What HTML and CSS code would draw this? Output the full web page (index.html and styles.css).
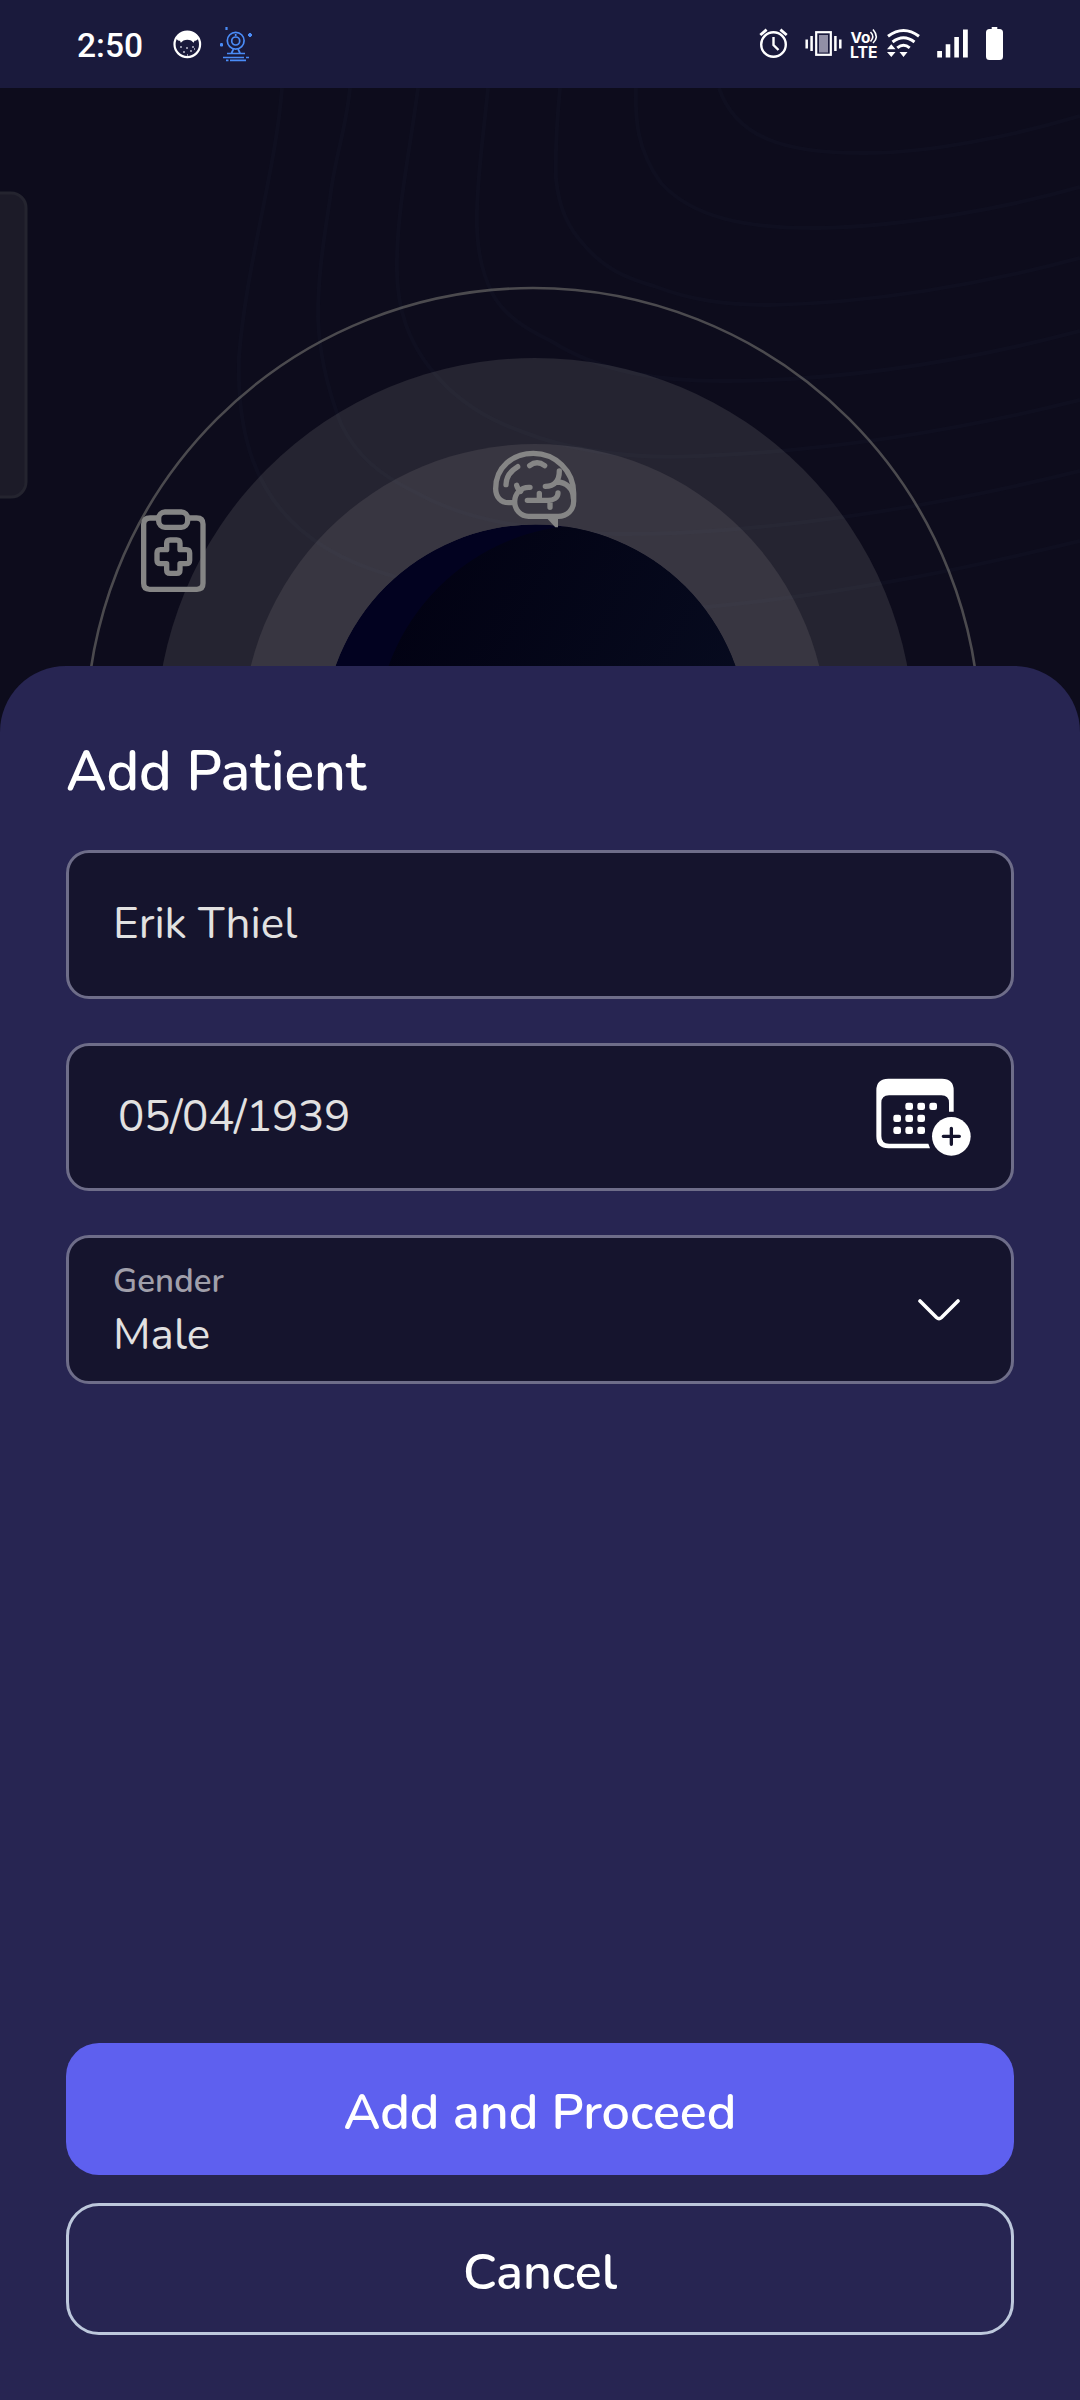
FILE: index.html
```html
<!DOCTYPE html>
<html lang="en">
<head>
<meta charset="utf-8">
<title>Add Patient</title>
<link rel="stylesheet" href="styles.css">
</head>
<body>
<div class="screen">
  <header class="status">
    <span class="clock">2:50</span>
    <svg class="status-left" viewBox="168 0 90 88" fill="none">
      <circle cx="187.3" cy="44.3" r="12.8" stroke="#fff" stroke-width="2.2"/>
      <path d="M176 38c3-5 7-7 11.300-7s8.500 2 11.400 7c-1 2-3 3-4.200 2.800l-.8 2-2.600-2.300c-2.600-.9-5-.9-7.600 0l-2.700 2.300-.8-2c-1.500 0-3-.8-4-2.800z" fill="#fff"/>
      <path d="M180 47h2m4 1h2m4-1h2m-11 5h2m5-1h2m-5 4h1m6-6h1" stroke="#b9b9c9" stroke-width="1.600"/>
      <g stroke="#4a8cf7" stroke-width="1.700">
        <circle cx="235.700" cy="40.700" r="8.400"/>
        <circle cx="235.700" cy="41" r="4"/>
        <path d="M235.700 34v2M233.500 49l-2 4m6.500-4l2 4M227 53.500h18M223 57.500h21M246 57.500h3M226 60.300h2.500M230 60.300h16"/>
        <path d="M226.500 27v3M221.500 43v3.500M220 44.800h3M248 35h4m-2-2v4" stroke-width="2.200"/>
      </g>
    </svg>
    <svg class="status-right" viewBox="750 0 330 88" fill="none" stroke="#fff">
      <circle cx="773.500" cy="44.500" r="12.300" stroke-width="2.400"/>
      <path d="M773.500 37v8l5 5" stroke-width="2.400"/>
      <path d="M760.300 35l6.300-5.400M786.700 35l-6.300-5.400" stroke-width="2.800"/>
      <rect x="816.200" y="32.200" width="14.600" height="22.600" stroke-width="2.200"/>
      <rect x="819" y="35" width="9" height="17.500" fill="#918fa6" stroke="none"/>
      <path d="M806.700 39.500v9M811.600 36v15M835.400 36v15M840.300 39.500v9" stroke-width="2.500"/>
      <g class="volte" fill="#fff" stroke="none">
        <text x="850.500" y="42.500" font-size="15" textLength="20" lengthAdjust="spacingAndGlyphs">Vo</text>
        <text x="850" y="57.500" font-size="16.500" textLength="27.500" lengthAdjust="spacingAndGlyphs">LTE</text>
      </g>
      <path d="M870.500 32q4.500 4.500 0 9.500M873 29.500q6.500 7.500 0 13.500" stroke-width="1.600"/>
      <path d="M888 36.200q15.500-11.500 31 0M892.500 42q11-8.500 22 0M897.300 47.800q6.200-5 12.400 0" stroke-width="3"/>
      <path d="M899.500 52h8l-4 5zM887 49.300h8.500l-4.200-5zM887 52h8.500l-4.200 5z" fill="#fff" stroke="none"/>
      <path d="M937.200 57.500v-6.500h4.800v6.500zM945.700 57.500v-13.200h4.600v13.200zM954.300 57.500v-20.500h4.600v20.500zM963 57.500v-28h4.800v28z" fill="#fff" stroke="none"/>
      <path d="M991.700 29v-2h5.600v2h2.200q3.500 0 3.500 3.500v24q0 3.500-3.500 3.500h-10q-3.500 0-3.500-3.500v-24q0-3.500 3.500-3.500z" fill="#fff" stroke="none"/>
    </svg>
  </header>

  <section class="hero">
    <svg viewBox="0 88 1080 644" fill="none">
      <defs>
        <linearGradient id="orb" x1="440" y1="540" x2="740" y2="700" gradientUnits="userSpaceOnUse">
          <stop offset="0" stop-color="#020213"/><stop offset="1" stop-color="#070b1f"/>
        </linearGradient>
        <clipPath id="core"><circle cx="535.500" cy="736.500" r="212"/></clipPath>
      </defs>
      <rect x="-20" y="193" width="46" height="304" rx="15" fill="#1c1b28" stroke="#24242f" stroke-width="3"/>
      <circle cx="535" cy="737" r="379" fill="#252431"/>
      <circle cx="535" cy="737" r="293" fill="#383641"/>
      <circle cx="533" cy="735" r="447" stroke="#4b4a4e" stroke-width="2.600"/>
      <g class="contours">
        <path d="M282 88C276 170 246 265 239 357C236 450 262 540 393 576C500 625 640 615 716 606C860 592 980 565 1080 541"/>
        <path d="M350 88C346 130 334 160 330 199C322 250 318 280 318 317C319 350 326 385 341 424C356 455 380 475 413 491C450 512 490 522 537 528C650 545 860 525 1080 471"/>
        <path d="M418 88C410 150 398 205 397 258C396 285 399 305 406 325C416 352 430 370 448 388C470 408 490 420 523 432C590 458 660 458 700 456C850 450 980 425 1080 400"/>
        <path d="M488 88C484 130 478 170 477 210C476 243 480 268 492 293C504 315 524 328 551 341C600 372 660 382 730 381C850 380 970 360 1080 331"/>
        <path d="M560 88C557 120 555 150 556 179C559 208 568 228 585 246C604 268 625 278 654 286C690 300 725 305 771 305C870 303 980 285 1080 258"/>
        <path d="M636 88C635 120 637 150 661 183C692 217 745 229 820 228C910 226 1010 207 1080 187"/>
        <path d="M719 88C736 138 785 153 861 153C930 154 1020 134 1080 116"/>
      </g>
      <g clip-path="url(#core)">
        <circle cx="535.500" cy="736.500" r="212" fill="#020220"/>
        <circle cx="589" cy="738" r="213" fill="url(#orb)"/>
      </g>
      <g class="glyph" transform="translate(440 420) scale(.33333)">
        <path d="M218 248h-12c-24 0-39-18-39-42C167 142 218 100 280 100c66 0 121 52 121 120v24c0 26-20 45-46 45h-89c-24 0-42-20-42-44s18-43 42-43h4"/>
        <path d="M230 196q3 12 12 18M198 194c0-22 15-42 35-54M269 137q22-17 45 0M316 199c28 0 42-18 42-46M350 186c28 0 50 20 50 48M262 241h62c17 0 30-8 30-22M298 220v18M330 244v18"/>
        <path d="M320 294h34v28h-8z" fill="#858585" stroke="none"/>
      </g>
      <g class="glyph" transform="translate(110 480) scale(.33333)">
        <path d="M140 114h-20q-19 0-19 19v177q0 18 18 18h142q18 0 18-18v-177q0-19-19-19h-20"/>
        <rect x="146" y="96" width="87" height="46" rx="19"/>
        <path d="M180 180h20q10 0 10 10v19h19q10 0 10 10v22q0 10-10 10h-19v19q0 10-10 10h-20q-10 0-10-10v-19h-19q-10 0-10-10v-22q0-10 10-10h19v-19q0-10 10-10z"/>
      </g>
    </svg>
  </section>

  <main class="sheet">
    <h1>Add Patient</h1>
    <form class="fields">
      <div class="field name">Erik Thiel</div>
      <div class="field date">
        <span>05/04/1939</span>
        <svg class="calendar" viewBox="105 112 290 240">
          <path d="M145 117h161q35 0 35 35v64h-14v-26q0-23-23-23h-157q-23 0-23 23v99q0 23 23 23h118l5 14h-125q-36 0-36-36v-138q0-35 36-35z"/>
          <g>
            <rect x="196" y="189" width="23" height="22" rx="7"/><rect x="232" y="189" width="23" height="22" rx="7"/><rect x="268" y="189" width="23" height="22" rx="7"/>
            <rect x="160" y="225" width="23" height="22" rx="7"/><rect x="196" y="225" width="23" height="22" rx="7"/><rect x="232" y="225" width="23" height="22" rx="7"/>
            <rect x="160" y="261" width="23" height="22" rx="7"/><rect x="196" y="261" width="23" height="22" rx="7"/><rect x="232" y="261" width="23" height="22" rx="7"/>
          </g>
          <circle cx="334" cy="290" r="58"/>
          <path class="plus" d="M310 290h48M334 266v48"/>
        </svg>
      </div>
      <div class="field gender">
        <div class="stack"><small>Gender</small><span>Male</span></div>
        <svg class="chevron" viewBox="0 0 42 22"><path d="M2 2L18.500 18.500Q21 20.700 23.500 18.500L40 2"/></svg>
      </div>
    </form>
    <div class="actions">
      <button class="primary">Add and Proceed</button>
      <button class="secondary">Cancel</button>
    </div>
  </main>
</div>
</body>
</html>
```
FILE: styles.css
```css
* { box-sizing: border-box; }
body {
  margin: 0;
  background: #0d0c1c;
  font-family: Nunito, "Open Sans", sans-serif;
}
.screen {
  width: 1080px;
  height: 2400px;
  display: flex;
  flex-direction: column;
  overflow: hidden;
}
svg { display: block; flex: none; }

.status {
  height: 88px;
  flex: none;
  display: flex;
  padding-left: 77px;
  background: #1a1a3c;
  color: #fff;
}
.clock {
  width: 91px;
  font: 500 33.6px/91px Roboto, sans-serif;
}
.status-left { width: 90px; height: 88px; }
.status-right { width: 330px; height: 88px; margin-left: auto; }
.volte { font-family: Inter, sans-serif; font-weight: 700; }

.hero { height: 644px; flex: none; }
.hero svg { width: 1080px; height: 644px; }
.contours { stroke: #8a9cc0; stroke-opacity: .022; stroke-width: 4; }
.glyph {
  stroke: #858585;
  stroke-width: 16;
  stroke-linecap: round;
  stroke-linejoin: round;
}

.sheet {
  position: relative;
  flex: 1;
  display: flex;
  flex-direction: column;
  margin-top: -66px;
  padding: 76px 66px 65px;
  border-radius: 66px 66px 0 0;
  background: #272552;
}
h1 {
  margin: 0 0 48px;
  color: #fff;
  font-size: 55.3px;
  font-weight: 600;
  line-height: 60px;
}
.fields { display: flex; flex-direction: column; gap: 44px; }
.field {
  display: flex;
  align-items: center;
  justify-content: space-between;
  height: 149px;
  padding: 0 43px;
  border: 3px solid #6e6d89;
  border-radius: 23px;
  background: #15142d;
  color: #e2e1e1;
  font-size: 44px;
  line-height: 50px;
}
.name { padding: 0 44px 2px; }
.date { height: 148px; padding: 0 39px 0 49px; letter-spacing: -.4px; }
.date span { padding-bottom: 0; }
.calendar { width: 96.7px; height: 80px; fill: #fff; }
.plus { stroke: #15142d; stroke-width: 10; stroke-linecap: round; }
.gender { padding: 0 51px 0 44px; }
.stack {
  display: flex;
  flex-direction: column;
  gap: 8px;
  padding-top: 3px;
}
.stack small {
  color: #a09faa;
  font-size: 33px;
  font-weight: 600;
  line-height: 40px;
  letter-spacing: .1px;
}
.chevron {
  width: 42px;
  height: 22px;
  fill: none;
  stroke: #fff;
  stroke-width: 3.6;
  stroke-linecap: round;
}

.actions {
  display: flex;
  flex-direction: column;
  gap: 28px;
  margin-top: auto;
}
button {
  height: 132px;
  padding: 7px 0 0;
  border: 0;
  border-radius: 33px;
  background: none;
  color: #fff;
  font: 600 50.2px/60px Nunito, "Open Sans", sans-serif;
}
.primary { background: #5e60ef; }
.secondary { border: 3px solid #bdc8dc; }
```
